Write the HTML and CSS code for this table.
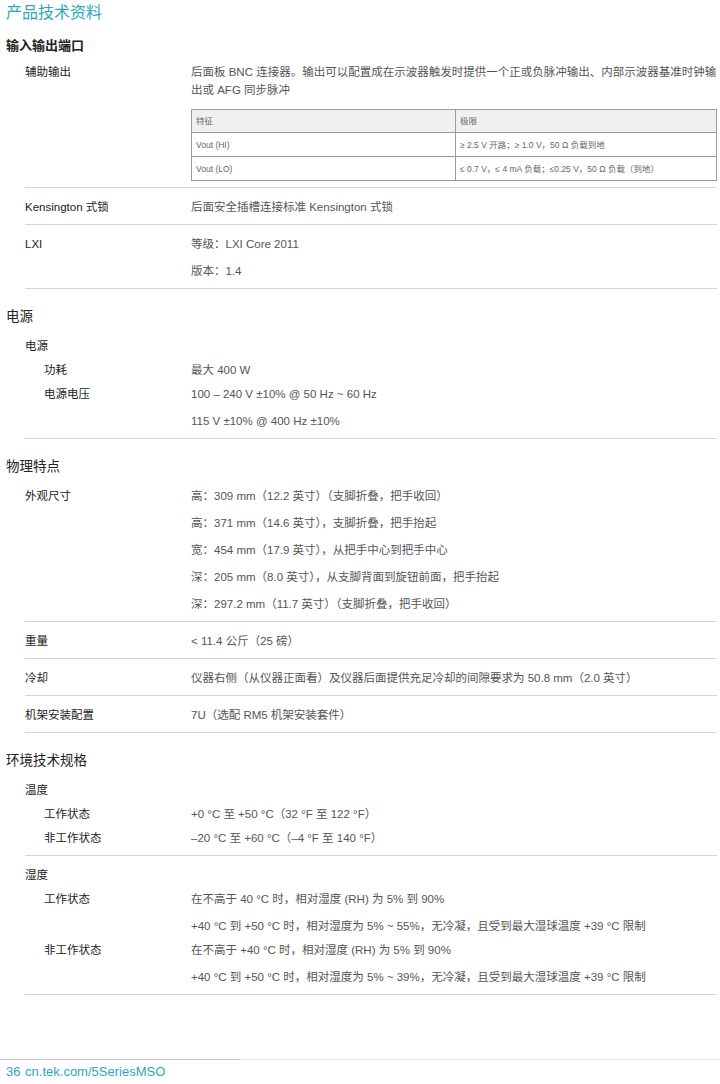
FILE: index.html
```html
<!DOCTYPE html>
<html lang="zh-CN">
<head>
<meta charset="UTF-8">
<meta name="viewport" content="width=device-width, initial-scale=1.0">
<title>产品技术资料</title>
<link rel="stylesheet" href="styles.css">
</head>
<body>

<div class="page">
  <h1 class="page-title">产品技术资料</h1>

  <!-- 输入输出端口 -->
  <div class="section first">
    <h2 class="bold">输入输出端口</h2>
    <div class="row tight">
      <div class="label">辅助输出</div>
      <div class="value">
        <p class="para">后面板 BNC 连接器。输出可以配置成在示波器触发时提供一个正或负脉冲输出、内部示波器基准时钟输出或 AFG 同步脉冲</p>
        <table class="spec-table">
          <tr class="head">
            <td class="col-a">特征</td>
            <td>极限</td>
          </tr>
          <tr>
            <td class="col-a">Vout (HI)</td>
            <td>≥ 2.5 V 开路；≥ 1.0 V，50 Ω 负载到地</td>
          </tr>
          <tr>
            <td class="col-a">Vout (LO)</td>
            <td>≤ 0.7 V，≤ 4 mA 负载；≤0.25 V，50 Ω 负载（到地）</td>
          </tr>
        </table>
      </div>
    </div>
    <div class="row">
      <div class="label">Kensington 式锁</div>
      <div class="value"><p>后面安全插槽连接标准 Kensington 式锁</p></div>
    </div>
    <div class="row">
      <div class="label">LXI</div>
      <div class="value">
        <p>等级：LXI Core 2011</p>
        <p>版本：1.4</p>
      </div>
    </div>
  </div>

  <!-- 电源 -->
  <div class="section">
    <h2>电源</h2>
    <div class="row group">
      <div class="sub-title">电源</div>
      <div class="sub-row">
        <div class="label sub">功耗</div>
        <div class="value"><p>最大 400 W</p></div>
      </div>
      <div class="sub-row">
        <div class="label sub">电源电压</div>
        <div class="value">
          <p>100 – 240 V ±10% @ 50 Hz ~ 60 Hz</p>
          <p>115 V ±10% @ 400 Hz ±10%</p>
        </div>
      </div>
    </div>
  </div>

  <!-- 物理特点 -->
  <div class="section">
    <h2>物理特点</h2>
    <div class="row">
      <div class="label">外观尺寸</div>
      <div class="value">
        <p>高：309 mm（12.2 英寸）（支脚折叠，把手收回）</p>
        <p>高：371 mm（14.6 英寸），支脚折叠，把手抬起</p>
        <p>宽：454 mm（17.9 英寸），从把手中心到把手中心</p>
        <p>深：205 mm（8.0 英寸），从支脚背面到旋钮前面，把手抬起</p>
        <p>深：297.2 mm（11.7 英寸）（支脚折叠，把手收回）</p>
      </div>
    </div>
    <div class="row">
      <div class="label">重量</div>
      <div class="value"><p>&lt; 11.4 公斤（25 磅）</p></div>
    </div>
    <div class="row">
      <div class="label">冷却</div>
      <div class="value"><p>仪器右侧（从仪器正面看）及仪器后面提供充足冷却的间隙要求为 50.8 mm（2.0 英寸）</p></div>
    </div>
    <div class="row">
      <div class="label">机架安装配置</div>
      <div class="value"><p>7U（选配 RM5 机架安装套件）</p></div>
    </div>
  </div>

  <!-- 环境技术规格 -->
  <div class="section">
    <h2>环境技术规格</h2>
    <div class="row group">
      <div class="sub-title">温度</div>
      <div class="sub-row">
        <div class="label sub">工作状态</div>
        <div class="value"><p>+0 °C 至 +50 °C（32 °F 至 122 °F）</p></div>
      </div>
      <div class="sub-row">
        <div class="label sub">非工作状态</div>
        <div class="value"><p>–20 °C 至 +60 °C（–4 °F 至 140 °F）</p></div>
      </div>
    </div>
    <div class="row group">
      <div class="sub-title">湿度</div>
      <div class="sub-row">
        <div class="label sub">工作状态</div>
        <div class="value">
          <p>在不高于 40 °C 时，相对湿度 (RH) 为 5% 到 90%</p>
          <p>+40 °C 到 +50 °C 时，相对湿度为 5% ~ 55%，无冷凝，且受到最大湿球温度 +39 °C 限制</p>
        </div>
      </div>
      <div class="sub-row">
        <div class="label sub">非工作状态</div>
        <div class="value">
          <p>在不高于 +40 °C 时，相对湿度 (RH) 为 5% 到 90%</p>
          <p>+40 °C 到 +50 °C 时，相对湿度为 5% ~ 39%，无冷凝，且受到最大湿球温度 +39 °C 限制</p>
        </div>
      </div>
    </div>
  </div>
</div>

<div class="footer">
  <span class="page-num">36</span>
  <span class="site">cn.tek.com/5SeriesMSO</span>
</div>

</body>
</html>
```

FILE: styles.css
```css
body {
  margin: 0;
  padding: 0;
  background: #fff;
  color: #555;
  font-family: "Liberation Sans", "Noto Sans CJK SC", sans-serif;
  font-size: 11.5px;
}

.page {
  height: 1059px;
  padding: 0 3px 0 6px;
}

.page-title {
  margin: 0;
  font-size: 16px;
  line-height: 26px;
  font-weight: normal;
  color: #2ea6bd;
}

.section {
  margin-top: 18px;
}

.section.first {
  margin-top: 10px;
}

h2 {
  margin: 0;
  font-size: 13.5px;
  line-height: 20px;
  font-weight: normal;
  color: #222;
}

h2.bold {
  font-weight: bold;
  font-size: 13px;
}

.row {
  display: grid;
  grid-template-columns: 166px 1fr;
  margin-left: 19px;
  padding: 10px 0 8px;
  border-bottom: 1px solid #d4d4d4;
  line-height: 18px;
}

.row.tight {
  padding-top: 7px;
  padding-bottom: 6px;
}

.row.group {
  display: flex;
  flex-direction: column;
  gap: 6px;
}

.sub-row {
  display: grid;
  grid-template-columns: 166px 1fr;
}

.sub-title {
  color: #222;
}

.label {
  color: #222;
}

.label.sub {
  padding-left: 19px;
}

.value p {
  margin: 0;
}

.value p + p {
  margin-top: 9px;
}

.value p.para {
  margin-right: -2px;
}

.value p.para + .spec-table {
  margin-top: 10px;
}

.spec-table {
  width: 100%;
  border-collapse: collapse;
  font-size: 8.5px;
  line-height: 12px;
  color: #666;
  border: 1px solid #9a9a9a;
}

.spec-table td {
  border: 1px solid #9a9a9a;
  padding: 0 4px;
  height: 23px;
}

.spec-table tr.head td {
  background: #f0f0f0;
  height: 22px;
}

.spec-table .col-a {
  width: 255px;
}

.footer {
  background: linear-gradient(to right, #c4c4c4 240px, #e8e8e8 240px) top left / 100% 1px no-repeat;
  padding: 4px 6px 0;
  font-size: 13px;
  line-height: 18px;
  color: #2ea6bd;
}

.page-num {
  margin-right: 1px;
}
```
